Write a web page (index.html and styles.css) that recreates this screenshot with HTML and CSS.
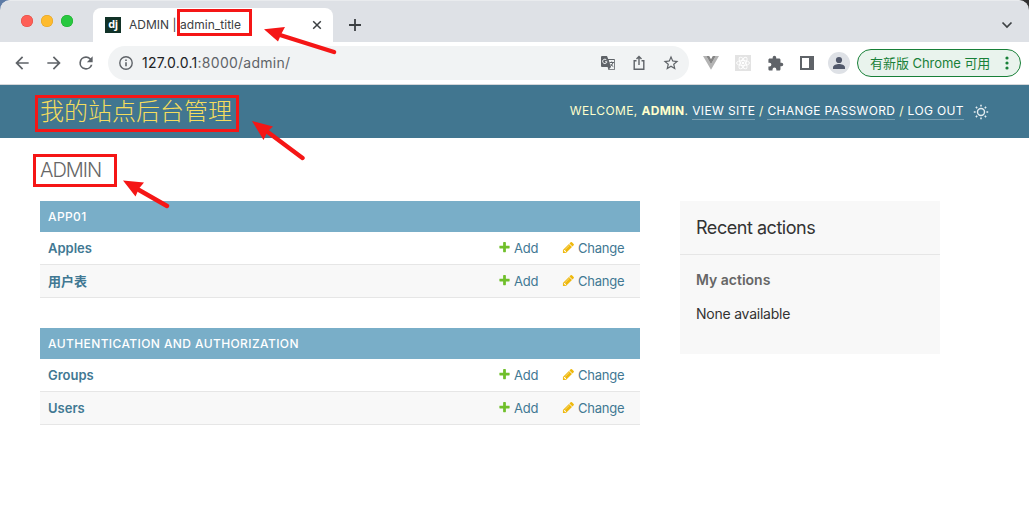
FILE: index.html
```html
<!DOCTYPE html>
<html lang="zh">
<head>
<meta charset="utf-8">
<title>ADMIN | admin_title</title>
<link rel="stylesheet" href="styles.css">
</head>
<body>
<svg width="0" height="0" class="defs">
  <symbol id="add" viewBox="0 0 1792 1792"><path fill="#70bf2b" d="M1600 736v192q0 40-28 68t-68 28h-416v416q0 40-28 68t-68 28H800q-40 0-68-28t-28-68v-416H288q-40 0-68-28t-28-68V736q0-40 28-68t68-28h416V224q0-40 28-68t68-28h192q40 0 68 28t28 68v416h416q40 0 68 28t28 68z"/></symbol>
  <symbol id="edit" viewBox="0 0 1792 1792"><path fill="#efb80b" d="M491 1536l91-91-235-235-91 91v107h128v128h107zm523-928q0-22-22-22-10 0-17 7l-542 542q-7 7-7 17 0 22 22 22 10 0 17-7l542-542q7-7 7-17zm-54-192l416 416-832 832h-416v-416zm683 96q0 53-37 90l-166 166-416-416 166-165q36-38 90-38 53 0 91 38l235 234q37 39 37 91z"/></symbol>
</svg>
<div class="window">
  <div class="tabstrip">
    <div class="lights"><i class="red"></i><i class="amber"></i><i class="green"></i></div>
    <div class="tab">
      <span class="favicon">dj</span>
      <span class="tab-title">ADMIN | admin_title</span>
      <svg class="close" width="10" height="10" viewBox="0 0 10 10"><path d="M1.2 1.2l7.6 7.6M8.8 1.2L1.2 8.8" stroke="#3c4043" stroke-width="1.5"/></svg>
    </div>
    <svg class="plus" width="14" height="14" viewBox="0 0 14 14"><path d="M7 1v12M1 7h12" stroke="#3c4043" stroke-width="1.8"/></svg>
    <svg class="chevron" width="12" height="8" viewBox="0 0 12 8"><path d="M1.5 1.5L6 6l4.500-4.500" fill="none" stroke="#3c4043" stroke-width="1.7"/></svg>
  </div>
  <div class="toolbar">
    <div class="nav">
      <svg width="20" height="20" viewBox="0 0 24 24"><path d="M20 11H7.830l5.590-5.590L12 4l-8 8 8 8 1.410-1.410L7.830 13H20z"/></svg>
      <svg width="20" height="20" viewBox="0 0 24 24"><path d="M4 11h12.170l-5.590-5.590L12 4l8 8-8 8-1.410-1.410L16.170 13H4z"/></svg>
      <svg width="20" height="20" viewBox="0 0 24 24"><path d="M17.650 6.350A7.960 7.960 0 0 0 12 4a8 8 0 1 0 7.730 10h-2.080A6 6 0 1 1 12 6c1.660 0 3.140.69 4.220 1.780L13 11h7V4z"/></svg>
    </div>
    <div class="omnibox">
      <svg width="16" height="16" viewBox="0 0 16 16"><circle cx="8" cy="8" r="6.200" fill="none" stroke="#5f6368" stroke-width="1.400"/><path d="M7.200 7.200h1.600v4H7.200zM7.200 4.600h1.600v1.500H7.200z"/></svg>
      <span class="url"><b>127.0.0.1</b>:8000/admin/</span>
      <span class="page-actions">
        <svg width="16" height="16" viewBox="0 0 16 16"><path d="M2 1h5l1.200 3H14a1 1 0 0 1 1 1v9a1 1 0 0 1-1 1H8.500L7.600 12H2a1 1 0 0 1-1-1V2a1 1 0 0 1 1-1z"/><path d="M8.700 5l2.300 7-2 2.200h5.200V5z" fill="#f1f3f4"/><path d="M9.500 7.500H14M11.700 6.500v1M13 7.700c-.4 1.600-1.500 2.800-2.500 3.500M10.800 9c.6 1.200 1.500 2 2.500 2.600" fill="none" stroke="#5f6368"/><path d="M6.700 5.200A2.200 2.200 0 1 0 7 6.800H5" fill="none" stroke="#f1f3f4"/></svg>
        <svg width="16" height="16" viewBox="0 0 16 16"><path d="M5.500 5.700H3.200v8.600h9.600V5.700h-2.300M8 10V1.800M5.500 4.100L8 1.600l2.500 2.500" fill="none" stroke="#5f6368" stroke-width="1.400"/></svg>
        <svg width="18" height="18" viewBox="0 0 24 24"><path d="M22 9.240l-7.190-.62L12 2 9.190 8.630 2 9.240l5.460 4.730L5.820 21 12 17.270 18.180 21l-1.630-7.030zM12 15.400l-3.760 2.270 1-4.280-3.320-2.880 4.380-.38L12 6.100l1.710 4.040 4.380.38-3.320 2.880 1 4.280z"/></svg>
      </span>
    </div>
    <div class="extensions">
      <svg width="16" height="14" viewBox="0 0 16 14"><path d="M0 0h3.200L8 8.300 12.800 0H16L8 13.800z" fill="#b3b3b3"/><path d="M3.200 0H6.200L8 3.200 9.800 0h3L8 8.300z" fill="#858585"/></svg>
      <svg width="16" height="16" viewBox="0 0 16 16"><path d="M0 0h16v16H0z" fill="#e3e3e3"/><g fill="none" stroke="#fff" stroke-width=".9"><ellipse cx="8" cy="8" rx="6.500" ry="2.500"/><ellipse cx="8" cy="8" rx="6.500" ry="2.500" transform="rotate(60 8 8)"/><ellipse cx="8" cy="8" rx="6.500" ry="2.500" transform="rotate(120 8 8)"/></g><circle cx="8" cy="8" r="1.300" fill="#fff"/></svg>
      <svg width="17" height="17" viewBox="0 0 24 24"><path d="M20.500 11H19V7c0-1.100-.9-2-2-2h-4V3.500a2.500 2.500 0 0 0-5 0V5H4c-1.100 0-2 .9-2 2v3.800h1.500a2.700 2.700 0 0 1 0 5.400H2V20c0 1.100.9 2 2 2h3.800v-1.500a2.700 2.700 0 0 1 5.400 0V22H17c1.100 0 2-.9 2-2v-4h1.500a2.500 2.500 0 0 0 0-5z"/></svg>
      <svg width="14" height="14" viewBox="0 0 14 14"><path d="M0 0h14v14H0zM2 2v10h7V2z" fill-rule="evenodd"/></svg>
    </div>
    <svg class="avatar" width="22" height="22" viewBox="0 0 22 22"><circle cx="11" cy="11" r="11" fill="#dee1e6"/><circle cx="11" cy="8" r="3.100"/><path d="M5 17v-1.500c0-2.300 3.800-3.400 6-3.400s6 1.100 6 3.400V17z"/></svg>
    <div class="update"><span>有新版 Chrome 可用</span><svg width="4" height="14" viewBox="0 0 4 14"><circle cx="2" cy="2" r="1.600"/><circle cx="2" cy="7" r="1.600"/><circle cx="2" cy="12" r="1.600"/></svg></div>
  </div>
  <header class="site-header">
    <div class="site-name">我的站点后台管理</div>
    <div class="user-tools">
      <span>WELCOME, <strong>ADMIN</strong>. <a>VIEW SITE</a> / <a>CHANGE PASSWORD</a> / <a>LOG OUT</a></span>
      <svg width="16" height="16" viewBox="0 0 16 16"><circle cx="8" cy="8" r="3.500" fill="none" stroke="#e4edf1" stroke-width="1.400"/><path d="M8 .8v1.800M8 13.400v1.800M.8 8h1.800M13.400 8h1.800M2.900 2.900l1.300 1.300M11.800 11.800l1.300 1.300M2.900 13.100l1.300-1.300M11.800 4.200l1.300-1.300" stroke="#e4edf1" stroke-width="1.600"/></svg>
    </div>
  </header>
  <main>
    <h1>ADMIN</h1>
    <div class="columns">
      <div class="apps">
        <section class="module">
          <h2>APP01</h2>
          <div class="row"><b>Apples</b><a><svg><use href="#add"/></svg>Add</a><a><svg><use href="#edit"/></svg>Change</a></div>
          <div class="row alt"><b class="cjk">用户表</b><a><svg><use href="#add"/></svg>Add</a><a><svg><use href="#edit"/></svg>Change</a></div>
        </section>
        <section class="module">
          <h2>AUTHENTICATION AND AUTHORIZATION</h2>
          <div class="row"><b>Groups</b><a><svg><use href="#add"/></svg>Add</a><a><svg><use href="#edit"/></svg>Change</a></div>
          <div class="row alt"><b>Users</b><a><svg><use href="#add"/></svg>Add</a><a><svg><use href="#edit"/></svg>Change</a></div>
        </section>
      </div>
      <aside class="recent">
        <h2>Recent actions</h2>
        <h3>My actions</h3>
        <p>None available</p>
      </aside>
    </div>
  </main>
  <svg class="annotations" width="1029" height="523" viewBox="0 0 1029 523">
    <g fill="none" stroke="#f51616" stroke-width="3">
      <path d="M178.500 10.500h72v24h-72zM36.500 96.500h201v34h-201zM34.500 155.500h81v30h-81z"/>
    </g>
    <g stroke="#f51616" stroke-width="4.400" stroke-linecap="round"><path d="M280 35l54 17M267 131.500l35.500 26.500M139 190l28 16"/></g>
    <g fill="#f51616"><path d="M264 29.300l21-2.200-3.500 6.400-3.500 8zM252 121l21 5.500-5.500 5-4 8.500zM123 180.500l21 2-5 6-3.500 8z"/></g>
  </svg>
</div>
</body>
</html>
```
FILE: styles.css
```css
* { box-sizing: border-box; }
body { margin: 0; background: #fff; font-family: Inter, "Noto Sans CJK SC", sans-serif; }
svg { display: block; flex: none; }
.defs { position: absolute; }
.window { position: relative; width: 1029px; height: 523px; overflow: hidden; background: linear-gradient(90deg, #5d7ba6 50%, #333 50%) top / 100% 12px no-repeat; }
.tabstrip { height: 42px; background: #dee1e6; display: flex; align-items: center; border-top: 1px solid #e9ebee; border-radius: 10px 10px 0 0; }
.lights { display: flex; gap: 8px; padding-left: 21px; width: 93px; }
.lights i { width: 12px; height: 12px; border-radius: 50%; margin-top: -2px; }
.red { background: #fe5f57; box-shadow: inset 0 0 0 .5px #df4a43; }
.amber { background: #febb2e; box-shadow: inset 0 0 0 .5px #dfa023; }
.green { background: #28c840; box-shadow: inset 0 0 0 .5px #1aab29; }
.tab { width: 240px; height: 34px; align-self: flex-end; background: #fff; border-radius: 8px 8px 0 0; display: flex; align-items: center; padding: 0 11px 0 12px; }
.favicon { width: 16px; height: 16px; background: #113228; color: #fff; font: bold 11px/13px "Open Sans", sans-serif; text-align: center; letter-spacing: -.3px; margin-right: 8px; }
.tab-title { font-size: 12px; color: #3c4043; white-space: nowrap; margin-top: -1px; letter-spacing: .03px; }
.close { margin-left: auto; }
.plus { margin: 7px 0 0 15px; }
.chevron { margin: 7px 16px 0 auto; }
.toolbar { height: 43px; background: #fff; border-bottom: 1px solid #d5d7da; display: flex; align-items: center; fill: #5f6368; }
.nav { display: flex; gap: 12px; padding-left: 12px; width: 108px; }
.omnibox { width: 581px; height: 34px; background: #f1f3f4; border-radius: 17px; display: flex; align-items: center; padding: 0 9px 0 10px; }
.url { margin: -2px 0 0 8px; font-size: 14px; letter-spacing: .26px; color: #5f6368; }
.url b { font-weight: 400; color: #202124; }
.page-actions { margin-left: auto; display: flex; align-items: center; gap: 15px; }
.extensions { display: flex; align-items: center; gap: 16px; margin-left: 14px; }
.avatar { margin-left: 14px; fill: #51586b; }
.update { width: 164px; height: 28px; margin-left: 7px; border: 1px solid #188038; border-radius: 14px; background: #e9f3ed; display: flex; align-items: center; justify-content: space-between; padding: 0 11px 0 12px; font-size: 13px; letter-spacing: -.05px; color: #188038; fill: #188038; white-space: nowrap; }
.update span { margin-top: -2px; }
.site-header { height: 53px; background: #417690; display: flex; justify-content: space-between; align-items: center; padding: 0 40px; }
.site-name { color: #f5dd5d; font-size: 24px; line-height: 30px; font-weight: 300; }
.user-tools { display: flex; align-items: center; color: #ffc; font-size: 12px; letter-spacing: .37px; white-space: nowrap; }
.user-tools span { margin-top: -2px; }
.user-tools a { color: #fff; border-bottom: 1px solid #7a9fb1; padding-bottom: 1px; }
.user-tools svg { margin-left: 9px; }
main { padding: 20px 40px; }
h1, h2, h3, p { margin: 0; }
h1 { font-size: 20px; line-height: 25px; font-weight: 300; letter-spacing: -1px; color: #666; margin-bottom: 18px; }
.columns { display: grid; grid-template-columns: 600px 260px; gap: 40px; align-items: start; }
.apps { display: grid; gap: 30px; }
.module h2 { height: 31px; padding: 0 8px; background: #79aec8; color: #fff; font-size: 12px; line-height: 31px; font-weight: 500; letter-spacing: .4px; }
.row { height: 33px; border-bottom: 1px solid #e6e6e6; display: grid; grid-template-columns: 450px 64px 70px; align-items: center; padding: 0 8px; font-size: 13px; color: #417893; }
.row.alt { background: #f8f8f8; }
.row b { font-weight: 600; }
.row .cjk { margin-top: -2px; }
.row a { display: flex; align-items: center; gap: 3px; letter-spacing: -.25px; }
.row svg { width: 13px; height: 13px; margin-top: -1px; }
.recent { height: 153px; background: #f8f8f8; color: #333; }
.recent h2 { height: 54px; padding: 0 16px; border-bottom: 1px solid #e6e6e6; font-size: 18px; line-height: 54px; font-weight: 400; letter-spacing: -.46px; }
.recent h3 { padding: 0 16px; margin-top: 15px; font-size: 14px; line-height: 20px; font-weight: 600; color: #666; }
.recent p { padding: 0 16px; margin-top: 14px; font-size: 14px; line-height: 20px; letter-spacing: -.23px; }
.annotations { position: absolute; left: 0; top: 0; }
```
